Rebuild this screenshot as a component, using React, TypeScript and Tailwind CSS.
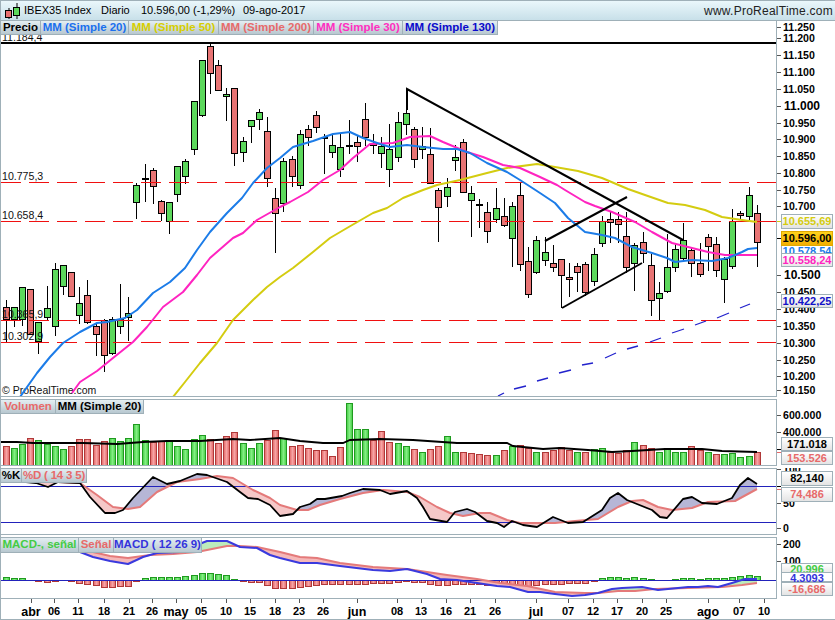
import React from "react";

type P = [number, number];
const xOf = (i: number) => Math.floor(6.3 + 8.163 * i);

const candles: [number, number, number, number, string][] = [
  [300,307,319,342,"r"],[307,307,319,327,"g"],[287,287,319,326,"g"],[289,289,334,334,"r"],[322,322,341,354,"g"],
  [286,308,317,321,"g"],[263,269,326,336,"g"],[265,265,286,295,"g"],[272,272,296,296,"r"],[287,303,315,324,"g"],
  [280,295,322,324,"r"],[323,326,334,356,"r"],[319,320,355,372,"r"],[317,319,353,355,"g"],[284,319,326,334,"g"],
  [297,313,317,341,"g"],[183,185,202,219,"g"],[164,178,179,202,"d"],[168,170,186,204,"r"],[200,201,213,221,"r"],
  [202,202,221,234,"g"],[166,166,194,202,"g"],[159,161,176,184,"g"],[101,101,149,155,"g"],[60,60,115,117,"g"],
  [43,46,73,94,"r"],[60,65,90,91,"r"],[88,94,96,121,"g"],[88,88,153,166,"r"],[137,141,152,162,"g"],
  [120,120,126,143,"g"],[109,112,119,130,"g"],[117,131,178,187,"r"],[188,198,213,253,"r"],[158,161,203,212,"g"],
  [156,159,176,187,"r"],[130,134,185,189,"g"],[125,129,137,146,"r"],[111,115,127,133,"r"],[134,137,138,174,"d"],
  [135,145,152,158,"g"],[134,147,169,177,"g"],[120,145,146,154,"d"],[135,142,146,162,"r"],[103,119,137,146,"r"],
  [134,143,145,154,"r"],[137,146,153,168,"g"],[124,149,169,187,"g"],[112,122,157,162,"g"],[89,113,124,135,"g"],
  [127,129,159,168,"r"],[127,146,149,159,"g"],[128,154,183,183,"r"],[188,190,207,242,"r"],[178,187,196,207,"g"],
  [145,157,160,171,"g"],[139,142,192,192,"r"],[186,193,200,237,"g"],[199,204,205,228,"d"],[202,212,231,243,"r"],
  [188,208,219,223,"g"],[198,216,225,227,"r"],[202,206,238,267,"g"],[182,195,264,271,"r"],[247,261,294,298,"r"],
  [236,240,272,274,"g"],[237,252,260,266,"g"],[245,263,267,272,"r"],[259,259,275,308,"r"],[263,277,279,297,"r"],
  [263,266,272,292,"r"],[262,264,292,296,"r"],[248,254,281,286,"g"],[216,221,243,247,"g"],[212,219,222,243,"r"],
  [212,219,224,243,"r"],[212,236,267,273,"r"],[243,245,263,291,"g"],[232,242,253,263,"r"],[254,265,300,316,"r"],
  [282,293,298,320,"g"],[234,267,291,293,"g"],[243,249,267,272,"g"],[223,240,258,261,"g"],[248,250,263,277,"r"],
  [243,263,274,277,"r"],[234,237,246,271,"r"],[237,244,270,277,"r"],[257,259,279,303,"g"],[209,221,266,269,"g"],
  [211,213,215,220,"r"],[187,195,216,220,"g"],[205,213,242,267,"r"],
];

const volZ = [
  153,160,148,130,136,148,154,163,153,133,133,150,139,130,139,130,88,136,142,139,136,154,163,133,121,133,145,124,112,145,160,145,136,106,
  130,154,151,160,166,166,184,157,25,103,103,136,109,142,145,154,163,172,163,154,124,172,172,175,178,181,181,166,154,151,160,172,172,166,
  157,166,172,172,163,160,172,175,166,142,151,160,172,160,172,172,154,166,172,178,178,175,187,184,172,
];
const volColors =
  "rggrggggrr" + "rrrgggggrr" + "gggggrrrrg" + "ggrrgrrrrr" + "rrgggrrrgg" +
  "rgrrggrrrr" + "grgrrgrrrr" + "grggrrrgrr" + "ggggrrgrgg" + "ggr";

const hist = [
  3,2,2,0,-1,-2,-1,0,-1,-3,-4,-5,-7,-7,-6,-6,-1,2,3,3,3,3,4,5,7,7,6,5,1,-1,-2,-2,-5,-8,
  -8,-8,-7,-6,-5,-4,-4,-4,-4,-4,-4,-3,-3,-3,-2,-1,-2,-2,-4,-5,-5,-4,-4,-4,-4,-5,-5,-5,-4,-5,-6,-5,-4,-4,
  -4,-3,-3,-3,-1,2,3,3,2,3,2,1,0,0,1,2,2,1,2,2,2,3,4,5,4,
];

const ma20: P[] = [[20,397],[37,373],[50,357],[63,343],[80,332],[97,323],[107,322],[125,318],[137,310],[153,293],[170,282],[185,268],[197,250],[210,232],[227,213],[242,198],[253,183],[267,168],[280,158],[293,147],[313,141],[333,134],[350,132],[363,138],[380,144],[390,147],[407,145],[423,147],[443,149],[457,149],[470,153],[487,163],[507,172],[520,180],[540,193],[555,203],[568,218],[585,232],[602,235],[615,238],[632,247],[652,253],[667,258],[675,262],[692,260],[712,261],[728,258],[742,252],[748,249],[757,248]];
const ma30: P[] = [[72,393],[80,382],[97,371],[113,358],[133,342],[147,327],[163,307],[183,292],[197,275],[210,258],[233,238],[243,233],[257,220],[280,207],[290,202],[308,192],[323,180],[340,170],[353,158],[370,144],[393,143],[410,137],[430,136],[443,142],[467,152],[483,157],[503,165],[520,168],[540,177],[557,185],[565,190],[585,202],[595,206],[612,212],[635,222],[652,232],[672,243],[692,248],[708,252],[725,255],[742,255],[757,255]];
const ma50: P[] = [[173,397],[185,382],[200,363],[217,343],[233,320],[253,300],[267,287],[280,277],[293,268],[313,252],[330,238],[347,228],[373,213],[387,208],[403,198],[423,190],[437,185],[460,180],[487,173],[507,168],[537,164],[555,167],[578,171],[602,178],[628,189],[645,195],[668,203],[685,205],[705,210],[722,217],[742,220],[757,222]];
const ma130: [number, number, number, number][] = [[498,396,504,393],[514,389,526,386],[537,381,548,378],[559,373,571,370],[582,365,593,363],[605,358,616,353],[627,349,638,346],[650,342,661,338],[672,333,684,329],[695,325,706,321],[717,318,729,313],[740,308,750,304]];

const volAvg: P[] = [[1,442],[17,442],[33,443],[50,443],[83,443],[117,444],[143,442],[167,441],[200,441],[233,439],[250,440],[280,438],[300,441],[323,443],[343,443],[350,440],[380,439],[413,440],[457,443],[507,443],[513,446],[543,449],[560,448],[588,450],[612,452],[632,451],[665,449],[702,449],[722,451],[757,452]];

const kLine: P[] = [[6,480],[36,483],[48,487],[58,482],[80,483],[90,497],[105,513],[115,513],[123,510],[133,498],[153,477],[167,484],[180,481],[197,474],[207,475],[227,482],[240,492],[248,498],[258,499],[270,505],[280,516],[293,514],[300,507],[310,504],[317,499],[325,499],[342,496],[350,493],[363,489],[380,490],[390,494],[407,491],[417,498],[423,507],[430,519],[447,522],[455,512],[467,509],[475,512],[487,521],[497,523],[504,527],[512,521],[523,525],[537,527],[553,517],[568,523],[583,522],[602,510],[610,498],[618,493],[627,500],[652,510],[660,517],[667,518],[683,499],[692,497],[702,503],[717,504],[732,498],[740,485],[748,478],[757,484]];
const dLine: P[] = [[6,480],[58,482],[80,483],[97,495],[113,507],[128,509],[140,507],[157,492],[177,482],[200,479],[217,476],[233,478],[253,490],[270,498],[280,505],[297,510],[308,510],[320,505],[340,499],[363,493],[383,490],[407,492],[420,497],[437,507],[450,513],[463,516],[480,513],[490,513],[507,520],[520,523],[537,523],[555,523],[575,521],[598,519],[618,507],[632,501],[643,500],[658,507],[672,510],[692,508],[708,502],[735,501],[757,489]];
const macd: P[] = [[6,540],[80,552],[93,557],[110,561],[128,564],[143,557],[157,553],[180,552],[197,545],[207,541],[227,541],[240,547],[257,548],[270,555],[280,558],[300,563],[317,563],[340,566],[373,570],[390,571],[407,569],[427,574],[440,579],[457,580],[477,583],[497,586],[510,587],[528,592],[540,592],[555,594],[572,596],[585,595],[598,593],[612,589],[622,588],[642,587],[658,590],[688,587],[698,587],[708,586],[718,587],[732,583],[745,579],[757,579]];
const signal: P[] = [[6,545],[80,549],[110,556],[128,558],[150,555],[173,554],[197,552],[227,546],[240,546],[257,547],[280,552],[300,557],[317,558],[340,563],[373,567],[407,569],[427,572],[447,575],[477,579],[500,583],[527,586],[555,592],[585,593],[598,593],[618,591],[635,591],[655,589],[688,588],[722,587],[742,585],[757,583]];

const pts = (a: P[]) => a.map((p) => p.join(",")).join(" ");

function at(a: P[], x: number) {
  for (let i = 1; i < a.length; i++) {
    if (x <= a[i][0]) {
      const [x0, y0] = a[i - 1];
      const [x1, y1] = a[i];
      return y0 + ((y1 - y0) * (x - x0)) / (x1 - x0);
    }
  }
  return a[a.length - 1][1];
}

function Between({ a, b, up, down, from = 6 }: { a: P[]; b: P[]; up: string; down: string; from?: number }) {
  const out: React.ReactNode[] = [];
  for (let x = from; x < 757; x++) {
    const ya = at(a, x + 0.5);
    const yb = at(b, x + 0.5);
    out.push(
      <rect key={x} x={x} width={1} y={Math.min(ya, yb)} height={Math.abs(ya - yb)} fill={ya < yb ? up : down} shapeRendering="crispEdges" />
    );
  }
  return <g>{out}</g>;
}

function BarGrads() {
  return (
    <defs>
      <linearGradient id="gb">
        <stop offset="0" stopColor="#42cc42" />
        <stop offset="0.5" stopColor="#84ee84" />
        <stop offset="1" stopColor="#42cc42" />
      </linearGradient>
      <linearGradient id="rb">
        <stop offset="0" stopColor="#e26464" />
        <stop offset="0.5" stopColor="#f6a4a4" />
        <stop offset="1" stopColor="#e26464" />
      </linearGradient>
    </defs>
  );
}

function Chip({ children, className }: { children: React.ReactNode; className: string }) {
  return (
    <div className={`flex h-full items-center justify-center whitespace-nowrap border-r border-b border-[#9fb0b8] bg-linear-to-b from-[#e4eef2] to-[#b8c8d0] text-[11.5px] font-bold leading-none ${className}`}>
      {children}
    </div>
  );
}

function Badge({ children, className }: { children: React.ReactNode; className: string }) {
  return (
    <div className={`absolute left-[4px] flex w-[52px] items-center justify-center border border-[#9fb0b8] text-[11px] font-bold leading-none ${className}`}>
      {children}
    </div>
  );
}

const ticksMain: [string, number, boolean?][] = [
  ["11.250", 27],["11.200", 38],["11.150", 55],["11.100", 72],["11.050", 89],["11.000", 106, true],["10.950", 123],["10.900", 139],["10.850", 156],["10.800", 173],["10.750", 190],["10.700", 206],["10.500", 275, true],["10.450", 292],["10.400", 309],["10.350", 326],["10.300", 343],["10.250", 360],["10.200", 376],["10.150", 390],
];

function AxisText({ items }: { items: [string, number, boolean?][] }) {
  return (
    <>
      {items.map(([t, y, big]) => (
        <g key={t}>
          <line x1={777} x2={781} y1={y + 0.5} y2={y + 0.5} stroke="#555" />
          <text x={big ? 784 : 783} y={y + 4} fontSize={big ? 12 : 10.6} fontWeight="bold" fill="#000">{t}</text>
        </g>
      ))}
    </>
  );
}

const dates: [string, number, boolean?][] = [
  ["abr",31,true],["06",54],["11",78],["18",104],["21",129],["26",152],["may",176,true],["05",201],["10",226],["15",250],["18",275],["23",299],["26",323],["jun",357,true],["08",397],["13",421],["16",446],["21",470],["26",495],["jul",536,true],["07",568],["12",593],["17",617],["20",642],["25",666],["ago",708,true],["07",739],["10",764],
];

const floats: [string, number, number][] = [
  ["11.184,4", 2, 41],["10.775,3", 2, 180],["10.658,4", 2, 219],["10.365,9", 2, 318],["10.302,9", 2, 340],
];

export default function App() {
  return (
    <div className="flex h-[620px] w-[835px] flex-col overflow-hidden border-b border-l border-[#9fb0b8] bg-white text-black [font-family:'Liberation_Sans',Arial,sans-serif]">
      <header className="flex h-[21px] shrink-0 items-center border-y border-[#9fb0b8] bg-linear-to-b from-[#eaf7fb] to-[#c8e0e9] text-[11px] leading-none">
        <svg className="ml-[2px] h-[19px] w-[18px] shrink-0" viewBox="0 0 18 19">
          <line x1="6" y1="7" x2="6" y2="18" stroke="#000" />
          <rect x="2.5" y="9.5" width="6" height="7" fill="#e87070" stroke="#000" />
          <line x1="14" y1="2" x2="14" y2="18" stroke="#000" />
          <rect x="10.5" y="6.5" width="6" height="8" fill="#5cd85c" stroke="#000" />
        </svg>
        <span className="ml-[3px] w-[77px]">IBEX35 Index</span>
        <span className="w-[40px]">Diario</span>
        <span className="w-[102px]">10.596,00 (-1,29%)</span>
        <span>09-ago-2017</span>
        <span className="ml-auto mr-[2px] text-[12px] tracking-[0.25px] text-[#222]">www.ProRealTime.com</span>
      </header>

      <section className="flex h-[376px] shrink-0">
        <div className="relative w-[776px] border-r border-b border-[#9fb0b8]">
          <svg className="block h-[375px] w-[775px]" viewBox="1 21 775 375">
            {candles.map(([hi, top, bot, lo, c], i) => {
              const x = xOf(i);
              return (
                <g key={i} shapeRendering="crispEdges">
                  <rect x={x} y={hi} width={1} height={lo - hi} fill="#000" />
                  {c === "d" ? (
                    <rect x={x - 3} y={top} width={7} height={2} fill="#000" />
                  ) : (
                    <rect x={x - 2.5} y={top + 0.5} width={6} height={bot - top} fill={c === "g" ? "#5cd85c" : "#e87474"} stroke="#000" />
                  )}
                </g>
              );
            })}
            <rect x={1} y={42} width={775} height={2} fill="#000" shapeRendering="crispEdges" />
            {[182.5, 221.5, 320.5, 342.5].map((y) => (
              <line key={y} x1={1} x2={776} y1={y} y2={y} stroke="#f01010" strokeDasharray="20 8" shapeRendering="crispEdges" />
            ))}
            {floats.map(([t, x, y]) => (
              <text key={t} x={x} y={y} fontSize={10.6} fill="#111">{t}</text>
            ))}
            <text x={2} y={394} fontSize={10.5} fill="#111">© ProRealTime.com</text>
            <polyline points={pts(ma50)} fill="none" stroke="#d4cc10" strokeWidth={2} strokeLinejoin="round" />
            <polyline points={pts(ma30)} fill="none" stroke="#ff24c0" strokeWidth={2} strokeLinejoin="round" />
            <polyline points={pts(ma20)} fill="none" stroke="#1c7ce8" strokeWidth={2} strokeLinejoin="round" />
            {ma130.map(([a, b, c, d]) => (
              <line key={a} x1={a} y1={b} x2={c} y2={d} stroke="#2222cc" strokeWidth={1.3} />
            ))}
            <g fill="none" stroke="#000" strokeWidth={2}>
              <polyline points="407,110 407,89 683,240" />
              <line x1={545} y1={241} x2={627} y2={197} />
              <line x1={562} y1={308} x2={642} y2={263} />
            </g>
          </svg>
          <div className="absolute left-0 top-0 flex h-[14px]">
            <Chip className="w-[40px] text-black">Precio</Chip>
            <Chip className="w-[88px] text-[#1a70ee]">MM (Simple 20)</Chip>
            <Chip className="w-[90px] text-[#d6ce00]">MM (Simple 50)</Chip>
            <Chip className="w-[95px] text-[#e76a6a]">MM (Simple 200)</Chip>
            <Chip className="w-[89px] text-[#ff30c0]">MM (Simple 30)</Chip>
            <Chip className="w-[95px] text-[#0a0acc]">MM (Simple 130)</Chip>
          </div>
        </div>
        <div className="relative flex-1">
          <svg className="block h-[376px] w-[58px]" viewBox="777 21 58 376">
            <AxisText items={ticksMain} />
            <line x1={777} x2={781} y1={221.5} y2={221.5} stroke="#d4cc10" />
            <line x1={777} x2={781} y1={238.5} y2={238.5} stroke="#000" />
          </svg>
          <Badge className="top-[193px] h-[15px] bg-linear-to-b from-white to-[#e2e2e2] text-[#d4cc10]">10.655,69</Badge>
          <Badge className="top-[224px] h-[9px] items-start overflow-visible bg-white text-[#1c7ce8]">10.578,54</Badge>
          <Badge className="top-[210px] h-[15px] border-[#e0a800] bg-linear-to-b from-[#ffd21c] to-[#f2ae00] text-black">10.596,00</Badge>
          <Badge className="top-[232px] h-[14px] bg-linear-to-b from-white to-[#e8e8e8] text-[#ff24c0]">10.558,24</Badge>
          <Badge className="top-[273px] h-[14px] bg-linear-to-b from-white to-[#e4e4e4] text-[#1212c8]">10.422,25</Badge>
        </div>
      </section>

      <section className="mt-[2px] flex h-[67px] shrink-0">
        <div className="relative w-[776px] border-y border-r border-[#9fb0b8]">
          <svg className="block h-[65px] w-[775px]" viewBox="1 400 775 65">
            <BarGrads />
            {volZ.map((z, i) => {
              const y = Math.round(395 + z / 3);
              const g = volColors[i] === "g";
              return (
                <rect key={i} x={xOf(i) - 2.5} y={y + 0.5} width={6} height={466 - y} fill={g ? "url(#gb)" : "url(#rb)"} stroke={g ? "#1f9a1f" : "#b03838"} shapeRendering="crispEdges" />
              );
            })}
            <polyline points={pts(volAvg)} fill="none" stroke="#000" strokeWidth={1.8} />
          </svg>
          <div className="absolute left-0 top-0 flex h-[14px]">
            <Chip className="w-[55px] text-[#e76a6a]">Volumen</Chip>
            <Chip className="w-[88px] text-black">MM (Simple 20)</Chip>
          </div>
        </div>
        <div className="relative flex-1">
          <svg className="block h-[67px] w-[58px]" viewBox="777 399 58 67">
            <AxisText items={[["600.000", 415], ["400.000", 432]]} />
            <line x1={777} x2={781} y1={449.5} y2={449.5} stroke="#000" />
            <line x1={777} x2={781} y1={452.5} y2={452.5} stroke="#e76a6a" />
          </svg>
          <Badge className="top-[38px] h-[14px] bg-linear-to-b from-white to-[#e4e4e4] text-black">171.018</Badge>
          <Badge className="top-[52px] h-[14px] bg-linear-to-b from-white to-[#e4e4e4] text-[#e76a6a]">153.526</Badge>
        </div>
      </section>

      <section className="mt-[2px] flex h-[67px] shrink-0">
        <div className="relative w-[776px] border-y border-r border-[#9fb0b8]">
          <svg className="block h-[65px] w-[775px]" viewBox="1 469 775 65">
            <Between a={kLine} b={dLine} up="#b6b6d6" down="#f5c8c8" />
            <line x1={1} x2={776} y1={486.5} y2={486.5} stroke="#2222bb" shapeRendering="crispEdges" />
            <line x1={1} x2={776} y1={522.5} y2={522.5} stroke="#2222bb" shapeRendering="crispEdges" />
            <polyline points={pts(dLine)} fill="none" stroke="#e47a7a" strokeWidth={2} strokeLinejoin="round" />
            <polyline points={pts(kLine)} fill="none" stroke="#000" strokeWidth={1.8} strokeLinejoin="round" />
          </svg>
          <div className="absolute left-0 top-0 flex h-[14px]">
            <Chip className="w-[21px] text-black">%K</Chip>
            <Chip className="w-[65px] tracking-[-0.2px] text-[#e76a6a]">%D ( 14 3 5)</Chip>
          </div>
        </div>
        <div className="relative flex-1">
          <svg className="block h-[67px] w-[58px]" viewBox="777 468 58 67">
            <AxisText items={[["100", 469], ["50", 503], ["0", 528]]} />
            <line x1={777} x2={781} y1={486.5} y2={486.5} stroke="#000" />
            <line x1={777} x2={781} y1={489.5} y2={489.5} stroke="#e76a6a" />
          </svg>
          <Badge className="top-[3px] h-[15px] bg-linear-to-b from-white to-[#e4e4e4] text-black">82,140</Badge>
          <Badge className="top-[19px] h-[15px] bg-linear-to-b from-white to-[#e4e4e4] text-[#e76a6a]">74,486</Badge>
        </div>
      </section>

      <section className="mt-[2px] flex h-[62px] shrink-0">
        <div className="relative w-[776px] border-y border-r border-[#9fb0b8]">
          <svg className="block h-[60px] w-[775px]" viewBox="1 538 775 60">
            <BarGrads />
            {hist.map((h, i) =>
              h === 0 ? null : (
                <rect key={i} x={xOf(i) - 2.5} y={(h > 0 ? 580 - h : 580) + 0.5} width={6} height={Math.abs(h)} fill={h > 0 ? "url(#gb)" : "url(#rb)"} stroke={h > 0 ? "#1f9a1f" : "#b03838"} shapeRendering="crispEdges" />
              )
            )}
            <Between a={macd} b={signal} up="#bcecbc" down="#f5b8b8" />
            <line x1={1} x2={776} y1={580.5} y2={580.5} stroke="#2222bb" shapeRendering="crispEdges" />
            <polyline points={pts(signal)} fill="none" stroke="#e47a7a" strokeWidth={2} strokeLinejoin="round" />
            <polyline points={pts(macd)} fill="none" stroke="#3a3ade" strokeWidth={2} strokeLinejoin="round" />
          </svg>
          <div className="absolute left-0 top-0 flex h-[15px]">
            <Chip className="w-[78px] text-[#44cc44]">MACD-, señal</Chip>
            <Chip className="w-[35px] text-[#e76a6a]">Señal</Chip>
            <Chip className="w-[88px] text-[#3434dc]">MACD ( 12 26 9)</Chip>
          </div>
        </div>
        <div className="relative flex-1">
          <svg className="block h-[62px] w-[58px]" viewBox="777 537 58 62">
            <AxisText items={[["200", 544], ["100", 561]]} />
          </svg>
          <Badge className="top-[26px] h-[12px] bg-linear-to-b from-white to-[#e4e4e4] text-[#44cc44]">20,996</Badge>
          <Badge className="top-[35px] h-[10px] items-start bg-white text-[#3434dc]">4,3093</Badge>
          <Badge className="top-[45px] h-[14px] bg-linear-to-b from-white to-[#e4e4e4] text-[#e76a6a]">-16,686</Badge>
        </div>
      </section>

      <footer className="flex-1">
        <svg className="block h-[20px] w-[834px]" viewBox="1 599 834 20">
          {dates.map(([t, x, big], i) => (
            <g key={i}>
              <line x1={x + 0.5} x2={x + 0.5} y1={599} y2={603} stroke="#555" />
              <text x={x} y={big ? 616 : 615} textAnchor="middle" fontSize={big ? 12.5 : 11} fontWeight="bold" fill="#000">{t}</text>
            </g>
          ))}
        </svg>
      </footer>
    </div>
  );
}
